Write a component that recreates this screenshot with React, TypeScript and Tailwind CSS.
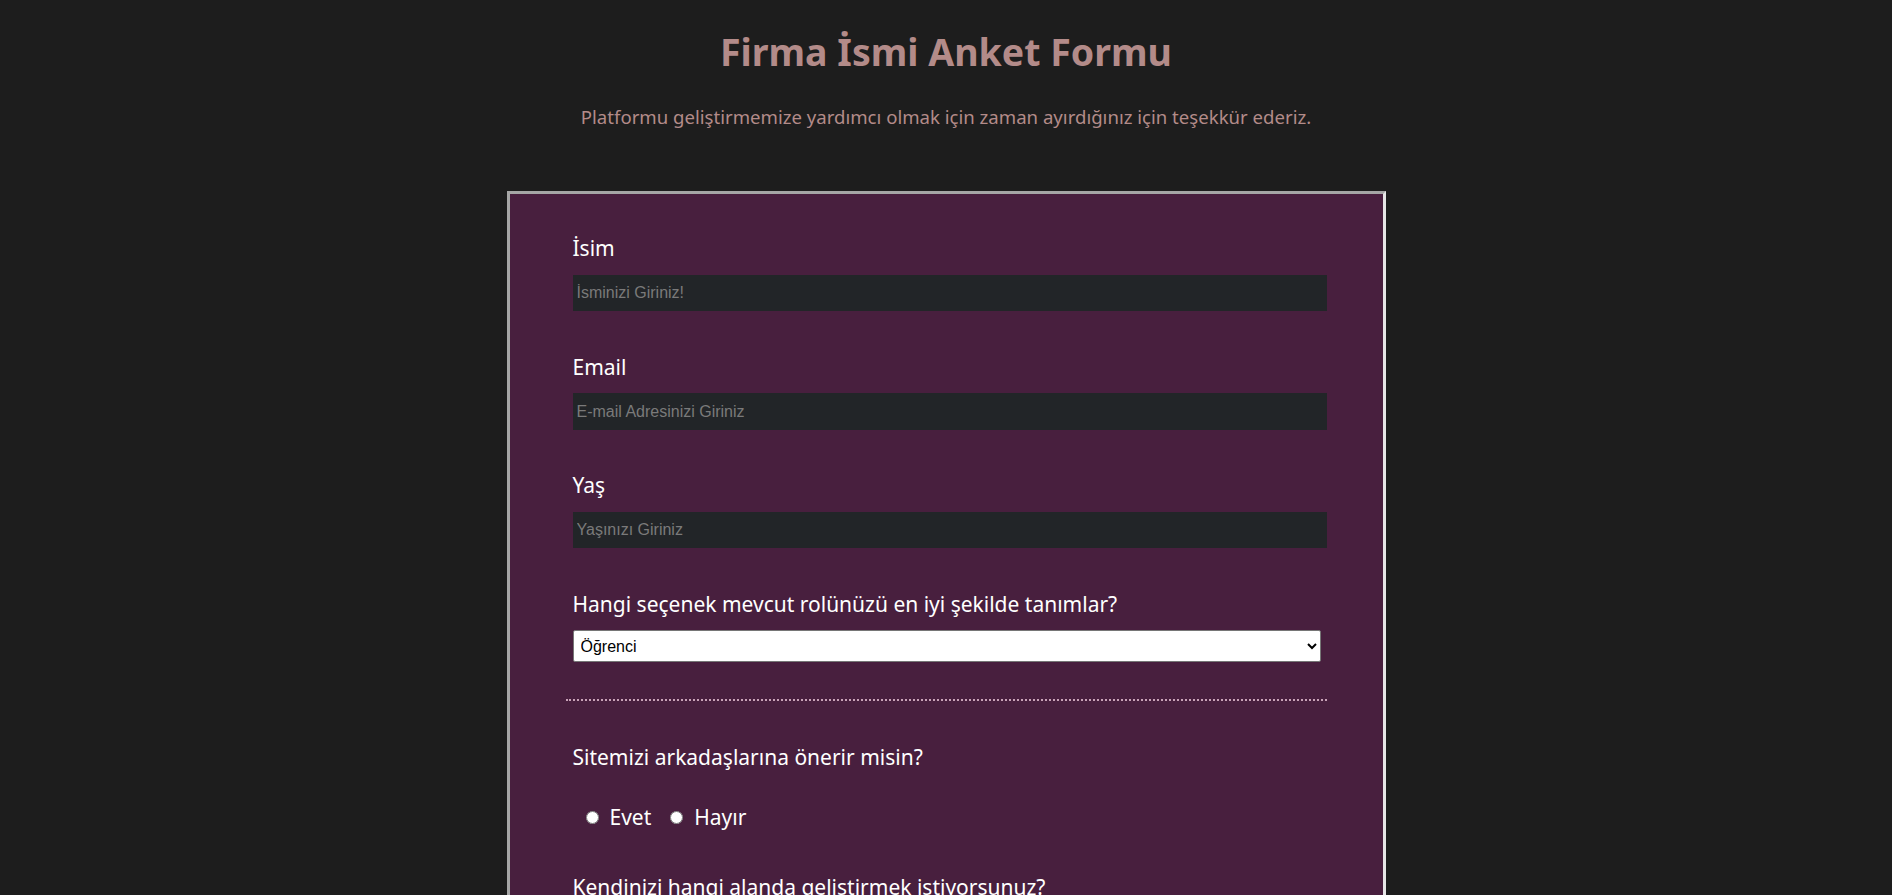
import { useState } from 'react';

const roles = ['Öğrenci', 'Tam Zamanlı Çalışan', 'Yarı Zamanlı Çalışan', 'Serbest Çalışan', 'Diğer'];
const areas = ['Ön Yüz Geliştirme', 'Arka Yüz Geliştirme', 'Veri Bilimi', 'Mobil Geliştirme'];

export default function App() {
  const [recommend, setRecommend] = useState('');

  return (
    <div className="min-h-screen bg-[#1d1d1d] pt-[28px] pb-16 font-['Noto_Sans','Open_Sans',sans-serif]">
      {/* Header */}
      <h1 className="text-center text-[37.5px] leading-[48px] font-bold text-[#b38b89]">Firma İsmi Anket Formu</h1>
      <p className="mt-[29px] text-center text-[18.6px] leading-[24px] text-[#b38b89]">
        Platformu geliştirmemize yardımcı olmak için zaman ayırdığınız için teşekkür ederiz.
      </p>

      {/* Form */}
      <form className="mx-auto mt-[62px] w-[879px] border-[3px] border-t-[#a6a6a6] border-l-[#a6a6a6] border-r-[#e6e6e6] border-b-[#e6e6e6] bg-[#481f3e] pl-[63px] pt-[42px] pb-12 text-white">
        <div className="w-[754px]">
          <label className="block text-[21px] leading-[24px]">İsim</label>
          <input type="text" placeholder="İsminizi Giriniz!"
            className="mt-[15px] block h-[36px] w-full bg-[#222528] px-[4px] font-['Liberation_Sans',Arial,sans-serif] text-[16px] text-white placeholder:text-[#7a7a7a] outline-none" />

          <label className="mt-[44px] block text-[21px] leading-[24px]">Email</label>
          <input type="email" placeholder="E-mail Adresinizi Giriniz"
            className="mt-[14px] block h-[37px] w-full bg-[#222528] px-[4px] font-['Liberation_Sans',Arial,sans-serif] text-[16px] text-white placeholder:text-[#7a7a7a] outline-none" />

          <label className="mt-[43px] block text-[21px] leading-[24px]">Yaş</label>
          <input type="number" placeholder="Yaşınızı Giriniz"
            className="mt-[15px] block h-[36px] w-full bg-[#222528] px-[4px] font-['Liberation_Sans',Arial,sans-serif] text-[16px] text-white placeholder:text-[#7a7a7a] outline-none" />

          <label className="mt-[44px] block text-[21px] leading-[24px]">Hangi seçenek mevcut rolünüzü en iyi şekilde tanımlar?</label>
          <select defaultValue={roles[0]}
            className="mt-[14px] block h-[32px] w-[748px] rounded-[2px] border border-[#767676] bg-white pl-[3px] font-['Liberation_Sans',Arial,sans-serif] text-[16px] text-black">
            {roles.map(r => <option key={r}>{r}</option>)}
          </select>

          <div className="ml-[-7px] mt-[37px] w-[761px] border-t-2 border-dotted border-[#c9a3b8]" />

          <p className="mt-[44px] text-[21px] leading-[24px]">Sitemizi arkadaşlarına önerir misin?</p>
          <div className="mt-[36px] flex items-center text-[21px] leading-[24px]">
            <label className="ml-[13px] flex items-center">
              <input type="radio" name="recommend" checked={recommend === 'evet'} onChange={() => setRecommend('evet')}
                className="m-0 h-[13px] w-[13px]" />
              <span className="ml-[11px]">Evet</span>
            </label>
            <label className="ml-[19px] flex items-center">
              <input type="radio" name="recommend" checked={recommend === 'hayir'} onChange={() => setRecommend('hayir')}
                className="m-0 h-[13px] w-[13px]" />
              <span className="ml-[11px]">Hayır</span>
            </label>
          </div>

          <p className="mt-[46px] text-[21px] leading-[24px]">Kendinizi hangi alanda geliştirmek istiyorsunuz?</p>
          <div className="mt-[30px] flex flex-col gap-3 pl-[13px] text-[21px] leading-[24px]">
            {areas.map(a => (
              <label key={a} className="flex items-center gap-2">
                <input type="checkbox" className="h-[13px] w-[13px]" />
                {a}
              </label>
            ))}
          </div>

          <p className="mt-[44px] text-[21px] leading-[24px]">Eklemek istedikleriniz</p>
          <textarea placeholder="Yorumlarınızı buraya yazınız..."
            className="mt-[15px] block h-[120px] w-full bg-[#222528] p-[4px] font-['Liberation_Sans',Arial,sans-serif] text-[16px] text-white placeholder:text-[#7a7a7a] outline-none" />

          <button type="button" className="mt-8 h-[40px] w-full bg-[#b38b89] text-[18px] text-white">Gönder</button>
        </div>
      </form>
    </div>
  );
}
